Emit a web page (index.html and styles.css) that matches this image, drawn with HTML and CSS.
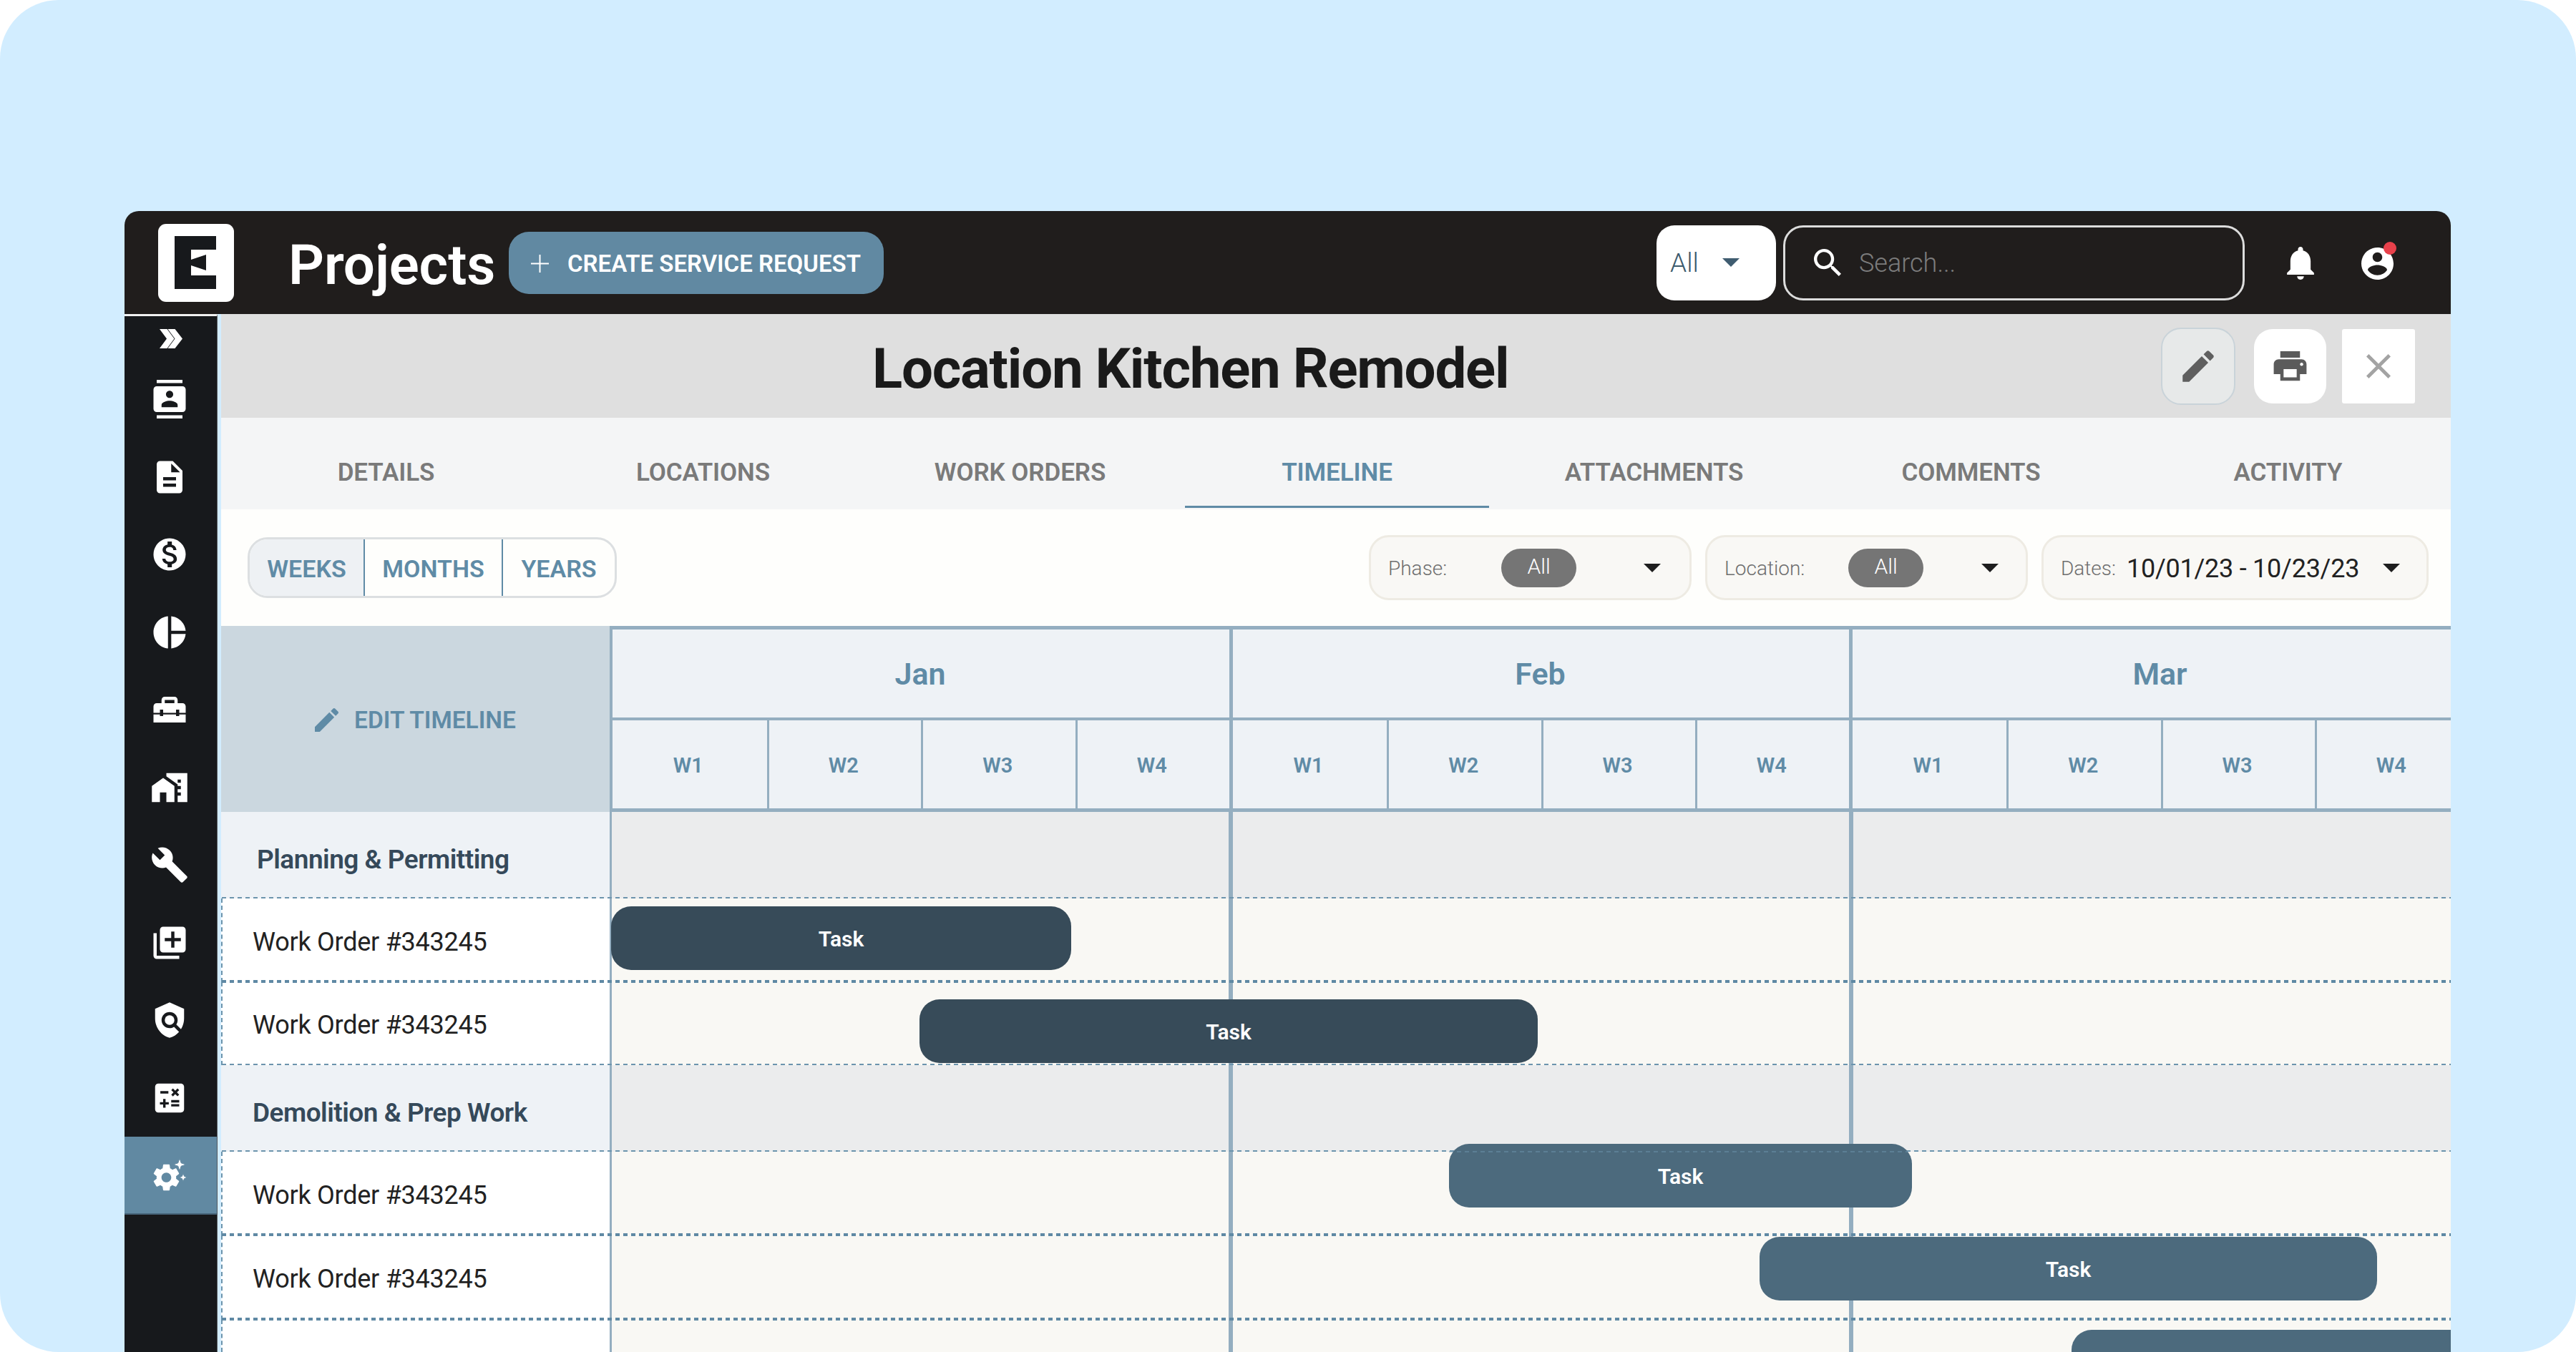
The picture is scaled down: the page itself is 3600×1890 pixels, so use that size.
FILE: index.html
```html
<!DOCTYPE html>
<html lang="en">
<head>
<meta charset="utf-8">
<title>Projects - Location Kitchen Remodel</title>
<link rel="stylesheet" href="styles.css">
</head>
<body>
<div class="page">
  <div class="window">
    <header class="topbar">
      <div class="logo"><svg viewBox="0 0 106 109" width="106" height="109"><path fill="#17191c" d="M23 17H81V36H46V50L67 43V65L46 58V72H81V91H23z"/></svg></div>
      <h1 class="app-title">Projects</h1>
      <button class="create-btn"><svg class="plus" viewBox="0 0 25 25" width="25" height="25"><path d="M11.500 0h2v11.500H25v2H13.500V25h-2V13.500H0v-2h11.500z"/></svg><span>CREATE SERVICE REQUEST</span></button>
      <div class="scope"><span>All</span><i class="caret caret-slate"></i></div>
      <div class="search">
        <svg viewBox="3 3 17.500 17.500" width="38" height="38"><path d="M15.500 14h-.79l-.28-.27C15.410 12.590 16 11.110 16 9.500 16 5.910 13.090 3 9.500 3S3 5.910 3 9.500 5.910 16 9.500 16c1.610 0 3.090-.59 4.230-1.570l.27.280v.79l5 4.990L20.490 19l-4.990-5zm-6 0C7.010 14 5 11.990 5 9.500S7.010 5 9.500 5 14 7.010 14 9.500 11.990 14 9.500 14z"/></svg>
        <span>Search...</span>
      </div>
      <svg class="bell" viewBox="4 2.500 16 19.500" width="38" height="46"><path d="M12 22c1.100 0 2-.9 2-2h-4c0 1.100.89 2 2 2zm6-6v-5c0-3.070-1.640-5.640-4.500-6.320V4c0-.83-.67-1.500-1.500-1.500s-1.500.67-1.500 1.500v.68C7.630 5.360 6 7.920 6 11v5l-2 2v1h16v-1l-2-2z"/></svg>
      <div class="user">
        <svg viewBox="2 2 20 20" width="45" height="45"><path d="M12 2C6.480 2 2 6.480 2 12s4.480 10 10 10 10-4.480 10-10S17.520 2 12 2zm0 3c1.660 0 3 1.340 3 3s-1.340 3-3 3-3-1.340-3-3 1.340-3 3-3zm0 14.200c-2.500 0-4.710-1.280-6-3.220.03-1.990 4-3.080 6-3.080 1.990 0 5.970 1.090 6 3.080-1.290 1.940-3.500 3.220-6 3.220z"/></svg>
        <i class="dot"></i>
      </div>
    </header>

    <div class="body">
      <nav class="sidebar">
        <a class="nav-item nav-toggle"><svg viewBox="0 0 32 27" width="32" height="27"><path d="M0 0h10.500l10 13.500-10 13.500H0l10-13.500zM11.500 0h10l10.500 13.500L21.500 27h-10l10-13.500z"/></svg></a>
        <a class="nav-item"><svg viewBox="0 0 24 24"><path d="M20 0H4v2h16V0zM4 24h16v-2H4v2zM20 4H4c-1.100 0-2 .9-2 2v12c0 1.100.9 2 2 2h16c1.100 0 2-.9 2-2V6c0-1.100-.9-2-2-2zm-8 2.750c1.240 0 2.250 1.010 2.250 2.250s-1.010 2.250-2.250 2.250S9.750 10.240 9.750 9 10.760 6.750 12 6.750zM17 17H7v-1.500c0-1.670 3.330-2.500 5-2.500s5 .83 5 2.500V17z"/></svg></a>
        <a class="nav-item"><svg viewBox="0 0 24 24"><path d="M14 2H6c-1.100 0-1.990.9-1.990 2L4 20c0 1.100.89 2 1.990 2H18c1.100 0 2-.9 2-2V8l-6-6zm2 16H8v-2h8v2zm0-4H8v-2h8v2zm-3-5V3.500L18.500 9H13z"/></svg></a>
        <a class="nav-item"><svg viewBox="0 0 24 24"><path d="M12 2C6.480 2 2 6.480 2 12s4.480 10 10 10 10-4.480 10-10S17.520 2 12 2zm1.410 16.090V20h-2.670v-1.930c-1.710-.36-3.160-1.460-3.270-3.400h1.960c.1 1.050.82 1.870 2.650 1.870 1.960 0 2.400-.98 2.400-1.590 0-.83-.44-1.610-2.670-2.140-2.480-.6-4.180-1.620-4.180-3.670 0-1.720 1.390-2.840 3.110-3.210V4h2.670v1.950c1.860.45 2.790 1.860 2.850 3.390H14.300c-.05-1.110-.64-1.870-2.220-1.870-1.500 0-2.400.68-2.400 1.640 0 .84.65 1.390 2.670 1.910s4.180 1.390 4.180 3.910c-.01 1.830-1.380 2.830-3.120 3.160z"/></svg></a>
        <a class="nav-item"><svg viewBox="0 0 24 24"><path d="M11 2v20c-5.070-.5-9-4.790-9-10s3.930-9.500 9-10zm2.030 0v8.990H22c-.47-4.740-4.240-8.520-8.970-8.990zm0 11.010V22c4.740-.47 8.500-4.250 8.970-8.990h-8.970z"/></svg></a>
        <a class="nav-item"><svg viewBox="0 0 24 24"><path d="M18 16h-2v-1H8v1H6v-1H2v5h20v-5h-4zm2-8h-3V6c0-1.100-.9-2-2-2H9c-1.100 0-2 .9-2 2v2H4c-1.100 0-2 .9-2 2v4h4v-2h2v2h8v-2h2v2h4v-4c0-1.100-.9-2-2-2zm-5 0H9V6h6v2z"/></svg></a>
        <a class="nav-item"><svg viewBox="0 0 24 24"><path d="M1 11v10h5v-6h4v6h5V11L8 6z"/><path d="M10 3v1.970l7 5V11h2v2h-2v2h2v2h-2v4h6V3H10zm9 6h-2V7h2v2z"/></svg></a>
        <a class="nav-item"><svg viewBox="0 0 24 24"><path d="M22.700 19l-9.100-9.100c.9-2.300.4-5-1.500-6.900-2-2-5-2.400-7.400-1.300L9 6 6 9 1.600 4.700C.4 7.100.9 10.100 2.900 12.100c1.900 1.900 4.600 2.400 6.900 1.500l9.100 9.100c.4.4 1 .4 1.400 0l2.300-2.300c.5-.4.5-1.100.1-1.400z"/></svg></a>
        <a class="nav-item"><svg viewBox="0 0 24 24"><path d="M4 6H2v14c0 1.100.9 2 2 2h14v-2H4V6zm16-4H8c-1.100 0-2 .9-2 2v12c0 1.100.9 2 2 2h12c1.100 0 2-.9 2-2V4c0-1.100-.9-2-2-2zm-1 9h-4v4h-2v-4H9V9h4V5h2v4h4v2z"/></svg></a>
        <a class="nav-item"><svg viewBox="0 0 24 24"><path d="M12 1 3 5v6c0 5.550 3.840 10.740 9 12 2.300-.56 4.330-1.900 5.880-3.710l-3.120-3.120c-1.940 1.290-4.580 1.070-6.290-.64-1.950-1.950-1.950-5.120 0-7.070 1.950-1.950 5.120-1.950 7.070 0 1.710 1.710 1.920 4.350.64 6.290l2.900 2.900C20.290 15.690 21 13.380 21 11V5l-9-4z"/><circle cx="12" cy="12" r="3"/></svg></a>
        <a class="nav-item"><svg viewBox="0 0 24 24"><path d="M19 3H5c-1.100 0-2 .9-2 2v14c0 1.100.9 2 2 2h14c1.100 0 2-.9 2-2V5c0-1.100-.9-2-2-2zm-5.970 4.060L14.090 6l1.410 1.410L16.910 6l1.060 1.060-1.410 1.410 1.410 1.410-1.060 1.060-1.410-1.400-1.410 1.410-1.060-1.060 1.410-1.410-1.410-1.420zm-6.780.66h5v1.500h-5v-1.500zM11.500 16h-2v2H8v-2H6v-1.500h2v-2h1.500v2h2V16zm6.500 1.250h-5v-1.500h5v1.500zm0-2.500h-5v-1.500h5v1.500z"/></svg></a>
        <a class="nav-item nav-active"><svg viewBox="0 0 54 54"><path transform="translate(22.500 31) scale(1.900) translate(-12 -12)" d="M19.140 12.940c.04-.3.06-.61.06-.94 0-.32-.02-.64-.07-.94l2.030-1.580c.18-.14.23-.41.12-.61l-1.920-3.320c-.12-.22-.37-.29-.59-.22l-2.390.96c-.5-.38-1.030-.7-1.620-.94l-.36-2.540c-.04-.24-.24-.41-.48-.41h-3.840c-.24 0-.43.17-.47.41l-.36 2.540c-.59.24-1.130.57-1.620.94l-2.390-.96c-.22-.08-.47 0-.59.22L2.740 8.870c-.12.21-.08.47.12.61l2.030 1.580c-.05.3-.09.63-.09.94s.02.64.07.94l-2.030 1.580c-.18.14-.23.41-.12.61l1.920 3.320c.12.22.37.29.59.22l2.390-.96c.5.38 1.030.7 1.620.94l.36 2.540c.05.24.24.41.48.41h3.840c.24 0 .44-.17.47-.41l.36-2.540c.59-.24 1.130-.56 1.620-.94l2.390.96c.22.08.47 0 .59-.22l1.920-3.320c.12-.22.07-.47-.12-.61l-2.010-1.580zM12 15.600c-1.980 0-3.600-1.620-3.600-3.600s1.620-3.600 3.600-3.600 3.600 1.620 3.600 3.600-1.620 3.600-3.600 3.600z"/><path d="M41 4l2.200 6.800L50 13l-6.800 2.200L41 22l-2.200-6.800L32 13l6.800-2.200zM46 25l1.600 4.400L52 31l-4.400 1.600L46 37l-1.600-4.400L40 31l4.400-1.600z" stroke="#6189a2" stroke-width="1"/></svg></a>
      </nav>

      <main class="main">
        <section class="title-band">
          <h2 class="page-title">Location Kitchen Remodel</h2>
          <div class="actions">
            <button class="action action-edit"><svg viewBox="0 0 24 24" width="58" height="58"><path d="M3 17.250V21h3.750L17.810 9.940l-3.750-3.750L3 17.250zM20.710 7.040c.39-.39.39-1.020 0-1.410l-2.340-2.340c-.39-.39-1.020-.39-1.410 0l-1.830 1.830 3.750 3.750 1.830-1.830z"/></svg></button>
            <button class="action action-print"><svg viewBox="0 0 24 24" width="55" height="55"><path d="M19 8H5c-1.660 0-3 1.340-3 3v6h4v4h12v-4h4v-6c0-1.660-1.340-3-3-3zm-3 11H8v-5h8v5zm3-7c-.55 0-1-.45-1-1s.45-1 1-1 1 .45 1 1-.45 1-1 1zm-1-9H6v4h12V3z"/></svg></button>
            <button class="action action-close"><svg viewBox="5 5 14 14" width="34" height="34"><path d="M19 6.410L17.590 5 12 10.590 6.410 5 5 6.410 10.590 12 5 17.590 6.410 19 12 13.410 17.590 19 19 17.590 13.410 12z"/></svg></button>
          </div>
        </section>

        <nav class="tabs">
          <a class="tab">DETAILS</a>
          <a class="tab">LOCATIONS</a>
          <a class="tab">WORK ORDERS</a>
          <a class="tab tab-active">TIMELINE</a>
          <a class="tab">ATTACHMENTS</a>
          <a class="tab">COMMENTS</a>
          <a class="tab">ACTIVITY</a>
        </nav>

        <section class="toolbar">
          <div class="segmented">
            <a class="segment segment-on seg-weeks">WEEKS</a>
            <a class="segment seg-months">MONTHS</a>
            <a class="segment seg-years">YEARS</a>
          </div>
          <div class="filters">
            <div class="filter filter-pill"><span class="filter-label">Phase:</span><span class="pill pill-phase">All</span><i class="caret caret-dark"></i></div>
            <div class="filter filter-pill"><span class="filter-label">Location:</span><span class="pill pill-location">All</span><i class="caret caret-dark"></i></div>
            <div class="filter filter-dates"><span class="filter-label">Dates:</span><span class="date-value">10/01/23 - 10/23/23</span><i class="caret caret-dark"></i></div>
          </div>
        </section>

        <section class="gantt">
          <div class="gantt-head">
            <div class="edit-cell"><svg viewBox="3 3 18 18" width="33" height="33"><path d="M3 17.250V21h3.750L17.810 9.940l-3.750-3.750L3 17.250zM20.710 7.040c.39-.39.39-1.020 0-1.410l-2.340-2.340c-.39-.39-1.020-.39-1.410 0l-1.830 1.830 3.750 3.750 1.830-1.830z"/></svg><span>EDIT TIMELINE</span></div>
            <div class="months">
              <div class="month"><div class="month-name">Jan</div><div class="weeks"><span>W1</span><span>W2</span><span>W3</span><span>W4</span></div></div>
              <div class="month"><div class="month-name">Feb</div><div class="weeks"><span>W1</span><span>W2</span><span>W3</span><span>W4</span></div></div>
              <div class="month"><div class="month-name">Mar</div><div class="weeks"><span>W1</span><span>W2</span><span>W3</span><span>W4</span></div></div>
            </div>
          </div>

          <div class="row row-group"><div class="label label-a">Planning &amp; Permitting</div><div class="track"></div></div>
          <div class="row row-wo r-thick rh-117"><div class="label">Work Order #343245</div><div class="track"><div class="bar bar-dark bar-top-11" style="left:2px;width:643px">Task</div></div></div>
          <div class="row row-wo rh-116"><div class="label">Work Order #343245</div><div class="track"><div class="bar bar-dark bar-top-24" style="left:433px;width:864px">Task</div></div></div>
          <div class="row row-group"><div class="label">Demolition &amp; Prep Work</div><div class="track"><div class="bar bar-mid bar-top-110" style="left:1173px;width:647px">Task</div></div></div>
          <div class="row row-wo r-thick rh-117"><div class="label">Work Order #343245</div><div class="track"></div></div>
          <div class="row row-wo r-thick rh-118"><div class="label">Work Order #343245</div><div class="track"><div class="bar bar-mid bar-top-2" style="left:1607px;width:863px">Task</div></div></div>
          <div class="row row-wo row-last"><div class="label"></div><div class="track"><div class="bar bar-mid bar-top-14" style="left:2043px;width:600px"></div></div></div>
        </section>
      </main>
    </div>
  </div>
</div>
</body>
</html>
```
FILE: styles.css
```css
* { box-sizing: border-box; }
html, body { margin: 0; padding: 0; background: #fff; }
body { font-family: Roboto, "Liberation Sans", sans-serif; color: #222; }
button { font: inherit; border: 0; padding: 0; }
h1, h2 { margin: 0; }

.page {
  width: 3600px; height: 1890px;
  background: #d2edff;
  border-radius: 82px;
  padding: 295px 175px 0 174px;
  overflow: hidden;
}
.window {
  width: 3251px; height: 1595px;
  border-radius: 20px 20px 0 0;
  overflow: hidden;
  display: flex; flex-direction: column;
}

/* top bar */
.topbar {
  height: 144px; flex: none;
  background: #201d1c;
  display: flex; align-items: center;
  padding-left: 47px; position: relative;
}
.logo { width: 106px; height: 109px; border-radius: 11px; background: #fff; flex: none; margin-top: 1px; }
.logo svg { display: block; }
.app-title {
  font-size: 78px; font-weight: 600; color: #fff;
  margin-left: 76px; margin-top: 8px; letter-spacing: -.1px; line-height: 1; width: 308px; flex: none;
}
.create-btn {
  width: 524px; height: 87px; flex: none; margin-top: 1px;
  background: #6189a2; color: #fff; border-radius: 28px;
  display: flex; align-items: center;
  padding-left: 31px; padding-top: 2px; font-size: 33px; font-weight: 600; letter-spacing: 0;
}
.plus { fill: #fff; margin-right: 26px; flex: none; }
.scope {
  width: 167px; height: 105px; flex: none; margin-left: 1080px;
  background: #fff; border-radius: 25px;
  display: flex; align-items: center; padding-left: 19px;
  font-size: 37px; font-weight: 300; color: #3c5a6d;
}
.scope span { width: 73px; }
.caret { display: block; width: 0; height: 0; border-style: solid; border-color: transparent; border-width: 12px 12px 0 12px; flex: none; }
.caret-slate { border-top-color: #3f5c70; }
.caret-dark { border-top-color: #1e1e1e; }
.search {
  width: 645px; height: 105px; flex: none; margin-left: 10px;
  border: 3px solid #dcdcdc; border-radius: 28px;
  display: flex; align-items: center; padding-left: 40px;
  color: #7c7c7c; font-size: 36px; font-weight: 300;
}
.search span { padding-top: 2px; margin-left: 1px; }
.search svg { fill: #fff; flex: none; margin-right: 24px; }
.bell { fill: #fff; flex: none; margin-left: 59px; margin-top: 2px; }
.user { position: relative; margin-left: 66px; height: 45px; flex: none; margin-top: 2px; }
.user svg { fill: #fff; display: block; }
.dot { position: absolute; right: -4px; top: -8px; width: 18px; height: 18px; border-radius: 50%; background: #e8414b; }

/* frame */
.body { flex: 1; display: flex; min-height: 0; }
.sidebar {
  width: 130px; flex: none;
  background: #17191c;
  border-top: 3px solid #f1f1f1;
  border-right: 1px solid #55585b;
  display: flex; flex-direction: column;
}
.nav-item { height: 108.500px; flex: none; display: flex; align-items: center; justify-content: center; padding-right: 3px; }
.nav-item svg { width: 54px; height: 54px; fill: #fff; display: block; }
.nav-toggle { height: 62px; padding-right: 0; }
.nav-toggle svg { width: 32px; height: 27px; }
.nav-active { background: #6189a2; border-bottom: 2px solid #47657a; }
.main { margin-left: 5px; flex: 1; min-width: 0; display: flex; flex-direction: column; }

/* title band */
.title-band {
  height: 145px; flex: none; background: #dfdfdf;
  display: flex; align-items: center;
  padding-left: 910px; padding-right: 50px;
}
.page-title { font-size: 78px; font-weight: 700; color: #1a1a1a; letter-spacing: -1.250px; line-height: 1; margin-top: 8px; }
.actions { margin-left: auto; display: flex; align-items: center; }
.action { display: flex; align-items: center; justify-content: center; flex: none; }
.action-edit { width: 104px; height: 108px; margin-right: 26px; background: #e7e9e9; border: 2px solid #c9d3d9; border-radius: 28px; fill: #5f5f5f; }
.action-print { width: 101px; height: 104px; margin-right: 22px; background: #fff; border-radius: 26px; fill: #5b5b5b; }
.action-close { width: 102px; height: 104px; background: #fff; border-radius: 3px; fill: #a3a3a3; }

/* tabs */
.tabs {
  height: 128px; flex: none; background: #f4f5f6;
  display: grid; grid-template-columns: repeat(7, 443px);
  padding-left: 9px;
}
.tab {
  display: flex; align-items: center; justify-content: center;
  height: 128px; padding-top: 24px;
  font-size: 35px; font-weight: 600; color: #7a7a7a; letter-spacing: -.1px;
  position: relative;
}
.tab-active { color: #5f8ba6; }
.tab-active::after { content: ""; position: absolute; left: 9px; right: 9px; bottom: 2px; height: 3px; background: #5f8ba6; }

/* toolbar */
.toolbar {
  height: 163px; flex: none; background: #fefefc;
  display: flex; align-items: center; justify-content: space-between;
  padding-left: 37px; padding-right: 31px;
}
.segmented {
  display: flex; height: 85px;
  border: 3px solid #dcdfe1; border-radius: 28px; overflow: hidden;
}
.segment {
  display: flex; align-items: center; justify-content: center; padding-top: 3px;
  font-size: 34px; font-weight: 600; color: #5f8ba6;
}
.seg-weeks { width: 161px; }
.seg-months { width: 193px; }
.seg-years { width: 156px; }
.segment-on { background: #eef1f4; }
.seg-weeks, .seg-months { border-right: 2px solid #5f8ba6; }
.filters { display: flex; gap: 19px; }
.filter {
  height: 91px; background: #f9f8f5;
  border: 3px solid #eeebe3; border-radius: 28px;
  display: flex; align-items: center; flex: none;
}
.filter-pill { width: 451px; padding-left: 24px; }
.filter-dates { width: 541px; padding-left: 24px; }
.filter-label { font-size: 28px; font-weight: 300; color: #6e6e6e; padding-top: 2px; }
.pill { width: 105px; height: 54px; border-radius: 27px; background: #757575; color: #fff; font-size: 30px; font-weight: 300; display: flex; align-items: center; justify-content: center; padding-bottom: 4px; }
.pill-phase { margin-left: 76px; margin-right: 94px; }
.pill-location { margin-left: 61px; margin-right: 81px; }
.date-value { font-size: 36px; color: #222; margin-left: 15px; margin-right: 33px; letter-spacing: -.25px; padding-top: 2px; }

/* gantt */
.gantt { flex: 1; min-height: 0; display: flex; flex-direction: column; }
.gantt-head { height: 260px; flex: none; display: flex; }
.edit-cell {
  width: 543px; flex: none; background: #cbd7df;
  display: flex; align-items: center; justify-content: center;
  padding-top: 2px; gap: 22px;
  font-size: 33.500px; font-weight: 600; color: #5f8ba6; letter-spacing: 0;
}
.edit-cell svg { fill: #5f8ba6; flex: none; }
.months {
  flex: 1; min-width: 0; display: flex; overflow: hidden;
  border-top: 5px solid #94aec0; border-bottom: 5px solid #94aec0;
  background: #eef2f6;
}
.month { flex: 0 0 866px; border-left: 5px solid #94aec0; display: flex; flex-direction: column; }
.month:first-child { border-left-width: 4px; }
.month-name {
  height: 127px; flex: none; border-bottom: 4px solid #94aec0; padding-right: 2px;
  display: flex; align-items: center; justify-content: center;
  font-size: 43px; font-weight: 600; color: #5f8ba6;
}
.weeks { flex: 1; display: grid; grid-template-columns: repeat(4, 1fr); }
.weeks span {
  display: flex; align-items: center; justify-content: center; padding-top: 3px; padding-right: 4px;
  font-size: 29px; font-weight: 600; color: #5f8ba6;
  border-left: 3px solid #94aec0;
}
.weeks span:first-child { border-left: 0; }

.row { flex: none; display: flex; position: relative; }
.row::after {
  content: ""; position: absolute; left: 1px; right: 0; bottom: 0; height: 2px; z-index: 1;
  background: repeating-linear-gradient(90deg, #6c94ad 0 6px, transparent 6px 11px);
}
.r-thick::after {
  height: 4px; bottom: -1px;
  background: repeating-linear-gradient(90deg, #5f89a4 0 6px, transparent 6px 11px);
}
.row-last::after { display: none; }
.row-group { height: 121px; }
.rh-117 { height: 117px; }
.rh-116 { height: 116px; }
.rh-118 { height: 118px; }
.row-last { height: 45px; }
.label {
  width: 543px; flex: none; display: flex; align-items: center;
  padding-left: 44px; padding-top: 4px;
  font-size: 36px; color: #222; letter-spacing: -.25px;
}
.row-wo .label { background: #fff; border-left: 2px dashed #6c94ad; padding-left: 42px; }
.row-group .label { background: #eef2f6; padding-top: 12px; font-size: 37px; font-weight: 600; color: #35495a; letter-spacing: -.5px; }
.row-group .label-a { padding-left: 50px; }
.track {
  flex: 1; min-width: 0; position: relative; background-color: #f9f8f4;
  background-image:
    linear-gradient(#94aec0, #94aec0),
    linear-gradient(#94aec0, #94aec0),
    linear-gradient(#94aec0, #94aec0);
  background-size: 3px 100%, 6px 100%, 6px 100%;
  background-position: 0 0, 865px 0, 1732px 0;
  background-repeat: no-repeat;
}
.row-group .track { background-color: #ebeced; }
.bar {
  position: absolute; height: 89px; border-radius: 28px;
  display: flex; align-items: center; justify-content: center;
  color: #fff; font-size: 30px; font-weight: 600; padding-top: 2px; z-index: 2;
}
.bar-dark { background: #374b59; }
.bar-mid { background: #4c6a7d; }
.bar-top-11 { top: 11px; }
.bar-top-24 { top: 24px; }
.bar-top-110 { top: 110px; }
.bar-top-110::before {
  content: ""; position: absolute; left: 0; right: 6px; top: 10px; height: 2px;
  background: repeating-linear-gradient(90deg, rgba(108,148,173,.5) 0 6px, transparent 6px 11px);
}
.bar-top-2 { top: 2px; }
.bar-top-14 { top: 14px; }
```
